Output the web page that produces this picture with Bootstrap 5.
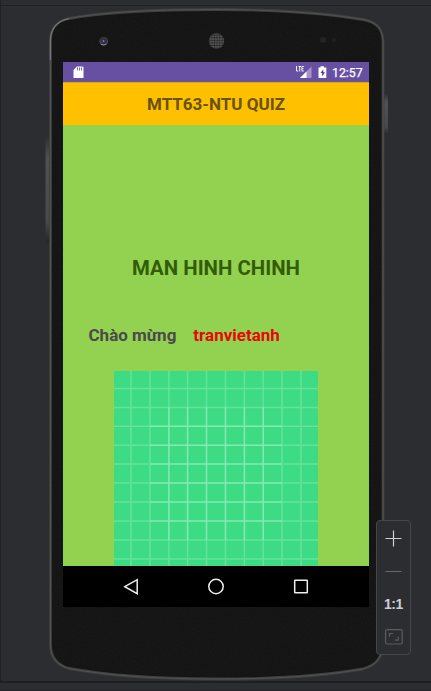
<!DOCTYPE html>
<html lang="vi">
<head>
<meta charset="utf-8">
<meta name="viewport" content="width=device-width, initial-scale=1">
<title>MTT63-NTU QUIZ</title>
<link rel="stylesheet" href="https://cdn.jsdelivr.net/npm/bootstrap@5.3.0/dist/css/bootstrap.min.css">
<style>
body{background:#2c2d31;font-family:Roboto,sans-serif;}
.stage{width:431px;height:691px;padding:62px 0 0 63px;}
.frame-art{left:0;top:0;}
.screen{width:306px;height:545px;background:#92d250;}
.statusbar{height:20px;background:#6750a2;padding:0 7px 0 10px;}
.battery{margin-left:6px;}
.clock{width:30px;white-space:nowrap;font-size:12.3px;font-weight:400;-webkit-text-stroke:.25px #fff;line-height:20px;margin-left:5px;padding-top:1px;}
.appbar{height:43px;background:#ffc000;border-top:1px solid #dba51a;color:#675207;font-size:17px;font-weight:700;line-height:1;padding-top:1px;}
.heading{margin-top:132px;font-size:20.4px;line-height:22px;font-weight:700;color:#335c06;}
.greet{margin-top:46px;padding-left:25.5px;gap:17px;font-size:17px;font-weight:700;line-height:20px;color:#4b484e;}
.user{color:#ea0505;}
.picture{margin-top:26px;height:195px;}
.navkeys{height:41px;background:#000;}
.zoombar{left:376px;top:520px;width:35px;height:135px;background:#2c2d31;border:1px solid #45474a;border-radius:4px;font-family:"Liberation Sans",sans-serif;font-size:14px;font-weight:700;color:#ced0d6;line-height:16px;padding-top:9px;}
.zoom-sep{margin-top:16px;}
.zoom-actual{margin-top:16px;letter-spacing:-.4px;}
.zoom-fit{margin-top:17px;}
</style>
<script src="https://cdn.jsdelivr.net/npm/bootstrap@5.3.0/dist/js/bootstrap.bundle.min.js"></script>
</head>
<body class="m-0 overflow-hidden">
<main class="stage position-relative overflow-hidden">
<svg class="frame-art position-absolute" width="431" height="691" viewBox="0 0 431 691" aria-hidden="true">
  <defs>
    <linearGradient id="key" x1="0" y1="0" x2="0" y2="1"><stop offset="0" stop-color="#303033"/><stop offset=".2" stop-color="#505154"/><stop offset=".8" stop-color="#48494b"/><stop offset="1" stop-color="#252629"/></linearGradient>
    <pattern id="mesh" width="2.6" height="2.6" patternUnits="userSpaceOnUse"><rect width="2.6" height="2.6" fill="#585858"/><circle cx="1.3" cy="1.3" r=".95" fill="#171717"/></pattern>
    <filter id="grain" x="0" y="0" width="1" height="1"><feTurbulence type="fractalNoise" baseFrequency=".8" numOctaves="2"/><feColorMatrix values="0 0 0 0 1  0 0 0 0 1  0 0 0 0 1  .04 0 0 0 -.014"/><feComposite in2="SourceGraphic" operator="in"/></filter>
  </defs>
  <path d="M0.5 0V682M0 5.5H431" stroke="#202125" fill="none"/>
  <path d="M0 682H431" stroke="#1e1f23" stroke-width="2"/>
  <path d="M0 690.5H431" stroke="#222327"/>
  <rect x="45.5" y="137" width="4" height="106" rx="1.5" fill="url(#key)"/>
  <rect x="384" y="94" width="4" height="41" rx="1.5" fill="url(#key)"/>
  <path d="M50.500 40C50.500 28 57 21 69 18.500C110 11 165 9.500 217 9.500C270 9.500 325 13 363 19.500C377 22 383 29 383 42V642C383 658 376 665 363 669C320 676.500 270 679 217 679C160 679 110 676 69 668.500C57 665 50.500 657 50.500 645Z" fill="#141414" stroke="#3f3f3f" stroke-width="2.800"/>
  <path d="M50.500 40C50.500 28 57 21 69 18.500C110 11 165 9.500 217 9.500C270 9.500 325 13 363 19.500C377 22 383 29 383 42V642C383 658 376 665 363 669C320 676.500 270 679 217 679C160 679 110 676 69 668.500C57 665 50.500 657 50.500 645Z" fill="none" stroke="#565656" stroke-width=".8"/>
  <path d="M50.300 60V42C50.300 28 57 21 69 18.500" fill="none" stroke="#777" stroke-width="1.200"/>
  <path d="M52 40C52 29 58 23 69 20C150 8 290 8 363 21C376 24 381 30 381 42V642C381 658 376 663 363 667C290 679 150 679 69 667C58 664 52 657 52 645Z" fill="#fff" filter="url(#grain)"/>
  <circle cx="103.700" cy="41.300" r="4.300" fill="#505050"/><circle cx="103.700" cy="40.800" r="3.500" fill="#303034"/><circle cx="103.500" cy="41.300" r="2.300" fill="#303060"/><circle cx="103.500" cy="41" r=".9" fill="#7775ba"/><path d="M101 44.300Q103.700 46 106.500 44" fill="none" stroke="#8a8a88"/>
  <circle cx="216.500" cy="41" r="7.700" fill="url(#mesh)"/>
  <circle cx="323" cy="40" r="3" fill="#242424"/><circle cx="334" cy="40" r="2" fill="#262626"/><circle cx="334" cy="40" r="1" fill="#171717"/>
</svg>
<section class="screen position-relative d-flex flex-column">
  <div class="statusbar d-flex align-items-center text-white flex-shrink-0">
    <svg width="11" height="14" viewBox="0 0 11 14"><path d="M4 1.500H9.500L10.500 2.500V13H.5V5Z" fill="#fff"/><path d="M4.500 2.500V5.500M6.500 2.500V5.500M8.500 2.500V5.500" stroke="#6750a2" stroke-width=".9"/></svg>
    <svg class="ms-auto" width="16" height="14" viewBox="0 0 16 14"><path d="M15.500 1.500V13H4Z" fill="#a493c7"/><path d="M10.500 6.500V13H4Z" fill="#fff"/><path d="M.5 1V6H2.300M2.500 1.500H5M3.700 1.500V6.500M7.800 1.500H5.900V6H7.800M5.900 3.700H7.500" fill="none" stroke="#fff" stroke-width=".9"/></svg>
    <svg class="battery" width="9" height="14" viewBox="0 0 9 14"><path d="M2.500 1.200H6V2.500H8.300V13H.5V2.500H2.500Z" fill="#fff"/><path d="M5.300 4.200L2.500 8H4.200V11.500L7 7.300H5.200Z" fill="#4d397f"/></svg>
    <span class="clock">12:57</span>
  </div>
  <header class="appbar d-flex align-items-center justify-content-center flex-shrink-0">MTT63-NTU QUIZ</header>
  <h1 class="heading text-center mb-0">MAN HINH CHINH</h1>
  <div class="greet d-flex"><span>Chào mừng</span><span class="user">tranvietanh</span></div>
  <svg class="picture mx-auto d-block flex-shrink-0" width="204" viewBox="0 0 204 195">
    <rect x="0" y="0" width="204" height="195" fill="#3ddc84"/>
    <path d="M17 0V195M36 0V195M54.900 0V195M73.600 0V195M92.500 0V195M111.500 0V195M130.400 0V195M149.200 0V195M168 0V195M187 0V195M0 17.400H204M0 36.400H204M0 55.300H204M0 74.200H204M0 93H204M0 112H204M0 131H204M0 150H204M0 169H204M0 188H204" stroke="#fff" stroke-opacity=".2" stroke-width="1.500"/>
    <path d="M54.900 36V169M73.600 36V169M92.500 36V169M111.500 36V169M130.400 36V169M149.200 36V169M36 55.300H168M36 74.200H168M36 93H168M36 112H168M36 131H168M36 150H168" stroke="#fff" stroke-opacity=".22" stroke-width="1.500"/>
  </svg>
  <nav class="navkeys mt-auto flex-shrink-0">
    <svg class="d-block" width="306" height="41" viewBox="0 0 306 41" fill="none" stroke="#eee" stroke-width="1.500"><path d="M61.800 20.700L74.200 13.700V27.700Z"/><circle cx="153" cy="20.500" r="7.200"/><rect x="231.700" y="14.200" width="12.600" height="12.600" rx=".5"/></svg>
  </nav>
</section>
<aside class="zoombar position-absolute d-flex flex-column align-items-center">
  <svg width="17" height="17" viewBox="0 0 17 17" stroke="#ced0d6" stroke-width="1.200"><path d="M8.500 .5V16.500M.5 8.500H16.500"/></svg>
  <svg class="zoom-sep flex-shrink-0" width="17" height="17" viewBox="0 0 17 17"><path d="M.5 8.500H16.500" stroke="#65676a" stroke-width="1.100"/></svg>
  <span class="zoom-actual">1:1</span>
  <svg class="zoom-fit flex-shrink-0" width="18" height="16" viewBox="0 0 18 16" fill="none" stroke="#5b5d60" stroke-width="1.200"><rect x=".6" y=".6" width="16.600" height="14.400" rx="1.500"/><path d="M4.500 8V4.500H8M13.300 7.700V11.200H9.700"/></svg>
</aside>
</main>
</body>
</html>
